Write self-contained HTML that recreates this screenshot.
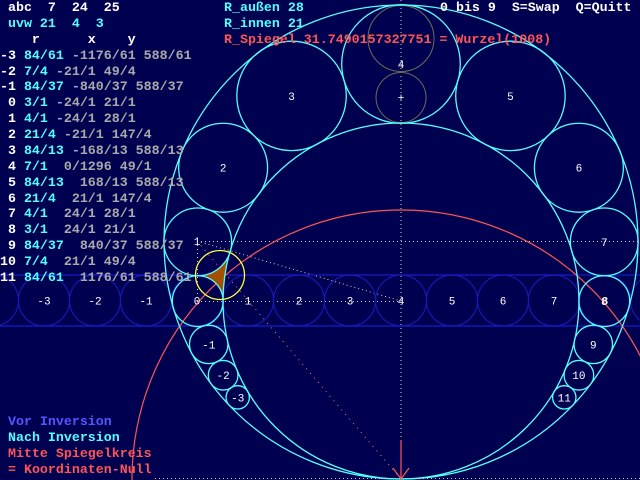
<!DOCTYPE html>
<html><head><meta charset="utf-8"><style>
html,body{margin:0;padding:0;background:#000050;width:640px;height:480px;overflow:hidden;position:relative}
pre{position:absolute;margin:0;font-family:"Liberation Mono",monospace;font-size:13.3px;line-height:15.88px;font-weight:bold;white-space:pre}
.w{color:#fff}.c{color:#55ffff}.g{color:#aaaaaa}.r{color:#ff5555}.b{color:#5555ff}
svg{position:absolute;left:0;top:0}
</style></head><body>
<svg id="s" width="640" height="480" viewBox="0 0 640 480">
<g stroke="#d8d8b0" stroke-width="1" stroke-dasharray="1,3" fill="none">
<line x1="401" y1="0" x2="401" y2="480"/>
<line x1="197" y1="241.5" x2="640" y2="241.5"/>
<line x1="197.5" y1="241" x2="197.5" y2="301"/>
<line x1="197" y1="301.5" x2="401" y2="301.5"/>
<line x1="197" y1="241" x2="401" y2="301"/>
<line x1="155" y1="478.5" x2="640" y2="478.5"/>
</g>
<line x1="197" y1="241" x2="401" y2="479" stroke="#ff7070" stroke-width="1" stroke-dasharray="1,5"/>
<g id="band"></g>
<line x1="0" y1="275" x2="640" y2="275" stroke="#1020c8" stroke-width="1.3"/>
<line x1="0" y1="326" x2="640" y2="326" stroke="#1020c8" stroke-width="1.3"/>
<circle cx="401" cy="479" r="269" stroke="#ff5555" stroke-width="1.2" fill="none"/>
<circle cx="401" cy="38.5" r="33" stroke="#6e6e5a" fill="none"/>
<circle cx="401" cy="97.5" r="25" stroke="#6e6e5a" fill="none"/>
<path d="M197.7,275.9 A33.9,33.9 0 0 0 230,251 A178,178 0 0 0 223,301 A25.4,25.4 0 0 0 197.7,275.9 Z" fill="#a45000"/>
<g id="cy" stroke="#55ffff" stroke-width="1.3" fill="none">
<circle cx="401" cy="242" r="237"/>
<circle cx="401" cy="301" r="178"/>
</g>
<circle cx="220" cy="275" r="24.5" stroke="#ffff44" stroke-width="1.3" fill="none"/>
<g id="lab" fill="#fff" font-family="Liberation Mono, monospace" font-size="11" text-anchor="middle"></g>
<g stroke="#ff5555" stroke-width="1.2"><line x1="401" y1="440" x2="401" y2="479"/><line x1="393" y1="468" x2="401" y2="479"/><line x1="409" y1="468" x2="401" y2="479"/></g>
<text x="401" y="101" fill="#fff" font-family="Liberation Mono" font-size="11" text-anchor="middle">+</text>
<text x="197" y="245" fill="#fff" font-family="Liberation Mono" font-size="11" text-anchor="middle">1</text>
</svg>
<pre style="left:8px;top:0"><span class="w">abc  7  24  25</span>
<span class="c">uvw 21  4  3</span></pre>
<pre style="left:0;top:31.76px"><span class="w">    r      x    y</span>
<span class="w">-3 </span><span class="c">84/61</span><span class="g"> -1176/61 588/61</span>
<span class="w">-2 </span><span class="c">7/4</span><span class="g"> -21/1 49/4</span>
<span class="w">-1 </span><span class="c">84/37</span><span class="g"> -840/37 588/37</span>
<span class="w"> 0 </span><span class="c">3/1</span><span class="g"> -24/1 21/1</span>
<span class="w"> 1 </span><span class="c">4/1</span><span class="g"> -24/1 28/1</span>
<span class="w"> 2 </span><span class="c">21/4</span><span class="g"> -21/1 147/4</span>
<span class="w"> 3 </span><span class="c">84/13</span><span class="g"> -168/13 588/13</span>
<span class="w"> 4 </span><span class="c">7/1</span><span class="g">  0/1296 49/1</span>
<span class="w"> 5 </span><span class="c">84/13</span><span class="g">  168/13 588/13</span>
<span class="w"> 6 </span><span class="c">21/4</span><span class="g">  21/1 147/4</span>
<span class="w"> 7 </span><span class="c">4/1</span><span class="g">  24/1 28/1</span>
<span class="w"> 8 </span><span class="c">3/1</span><span class="g">  24/1 21/1</span>
<span class="w"> 9 </span><span class="c">84/37</span><span class="g">  840/37 588/37</span>
<span class="w">10 </span><span class="c">7/4</span><span class="g">  21/1 49/4</span>
<span class="w">11 </span><span class="c">84/61</span><span class="g">  1176/61 588/61</span></pre>
<pre style="left:224px;top:0"><span class="c">R_außen 28</span>
<span class="c">R_innen 21</span>
<span class="r">R_Spiegel 31.7490157327751 = Wurzel(1008)</span></pre>
<pre style="left:440px;top:0" class="w">0 bis 9  S=Swap  Q=Quitt</pre>
<pre style="left:8px;top:414px;height:64px;overflow:hidden"><span class="b">Vor Inversion</span>
<span class="c">Nach Inversion</span>
<span class="r">Mitte Spiegelkreis</span>
<span class="r">= Koordinaten-Null</span></pre>
<script>
var NS="http://www.w3.org/2000/svg",band=document.getElementById('band'),cy=document.getElementById('cy'),lab=document.getElementById('lab');
function el(p,t,a){var e=document.createElementNS(NS,t);for(var k in a)e.setAttribute(k,a[k]);p.appendChild(e);return e;}
var Ox=401,Oy=479,R2=72570,r=25.5;
for(var n=-4;n<=9;n++){
 var cx=197+51*n,cyy=300.5;
 el(band,'circle',{cx:cx,cy:cyy,r:r,stroke:'#1818b0','stroke-width':1.2,fill:'none'});
 if(n>=-3&&n<=8){var t=el(lab,'text',{x:cx,y:cyy+4});t.textContent=n;}
}
for(var n=-3;n<=11;n++){
 var cx=197+51*n,cyy=300.5,dx=cx-Ox,dy=cyy-Oy,d2=dx*dx+dy*dy-r*r,f=R2/d2;
 var X=Ox+dx*f,Y=Oy+dy*f,RR=r*f;
 el(cy,'circle',{cx:X,cy:Y,r:RR});
 if(n!==0&&n!==1){var t=el(lab,'text',{x:X,y:Y+4});t.textContent=n;}
}
</script>
</body></html>
